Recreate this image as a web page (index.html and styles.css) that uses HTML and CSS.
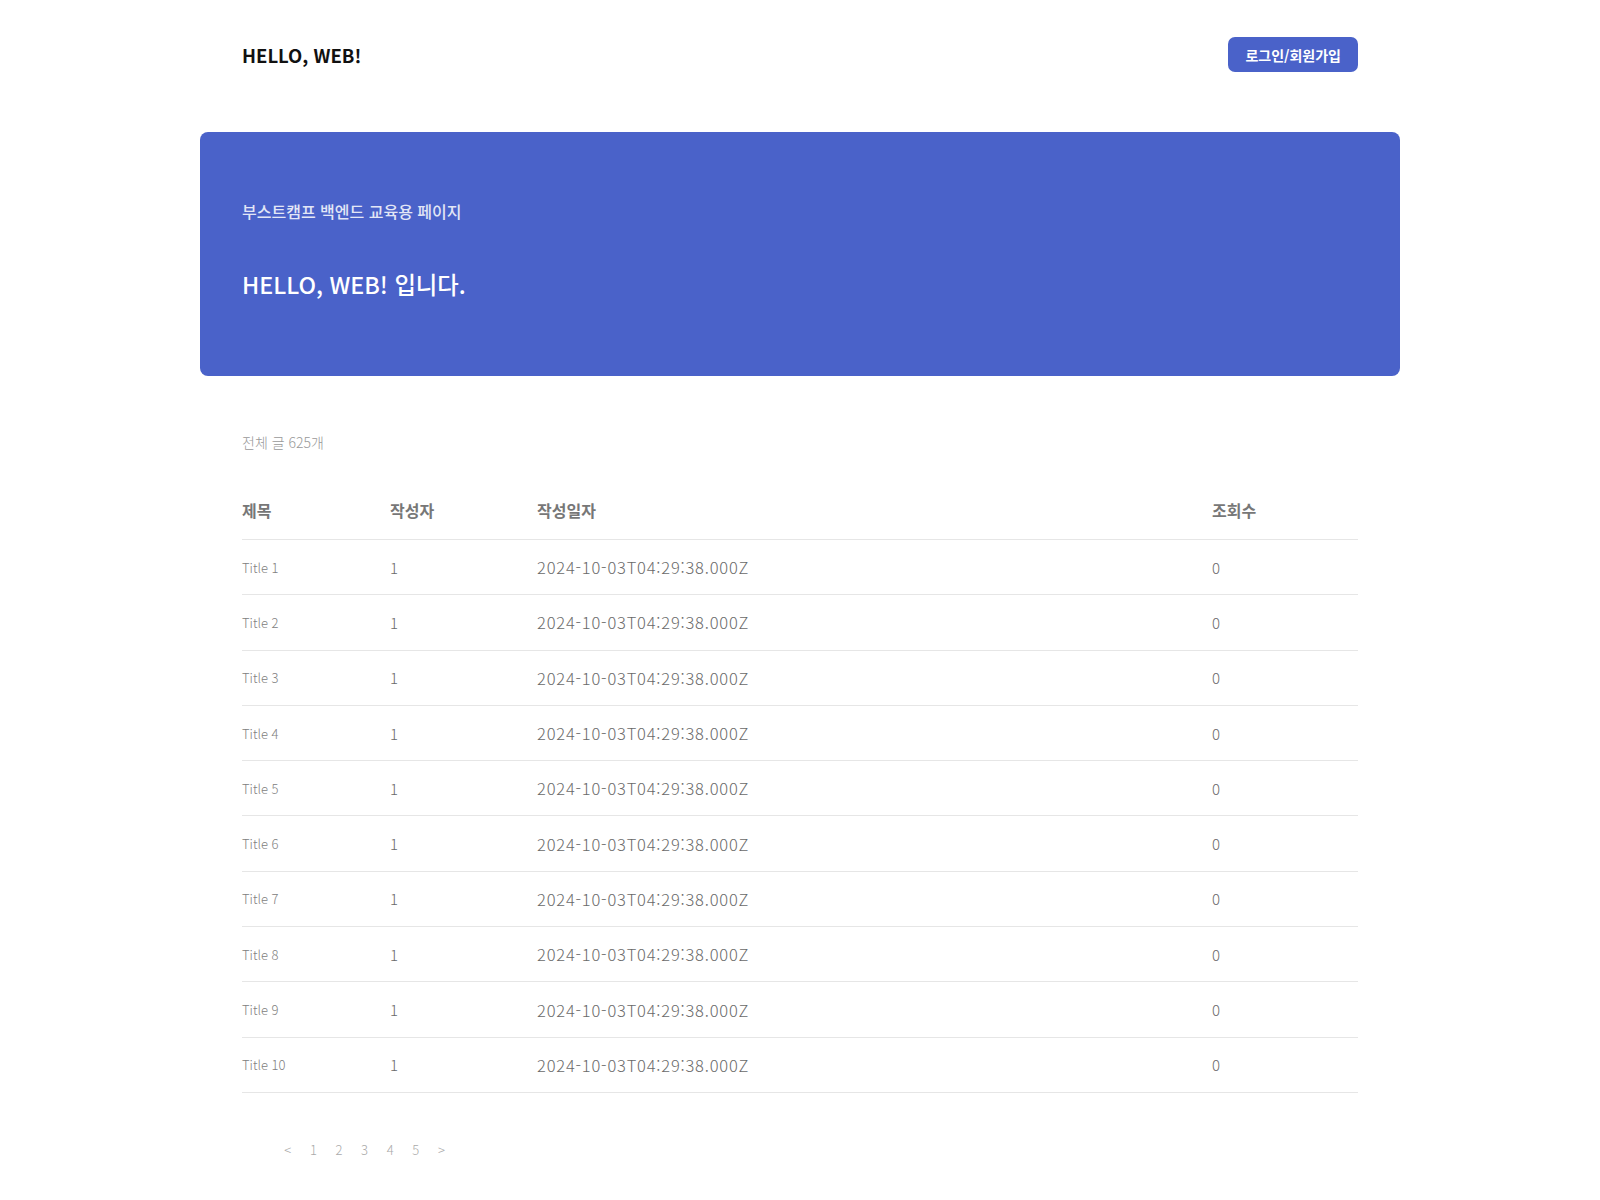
FILE: index.html
```html
<!DOCTYPE html>
<html lang="ko">
<head>
    <meta charset="UTF-8">
    <meta name="viewport" content="width=device-width, initial-scale=1.0">
    <title>HELLO, WEB!</title>
    <link rel="stylesheet" href="styles.css">
</head>
<body>
    <div class="page">
        <header class="top-bar">
            <a class="logo" href="#">HELLO, WEB!</a>
            <button class="login-btn">로그인/회원가입</button>
        </header>

        <section class="hero">
            <p class="hero-sub">부스트캠프 백엔드 교육용 페이지</p>
            <h1 class="hero-title">HELLO, WEB! 입니다.</h1>
        </section>

        <main class="board">
            <p class="post-count">전체 글 625개</p>
            <table class="post-table">
                <thead>
                    <tr>
                        <th class="col-title">제목</th>
                        <th class="col-author">작성자</th>
                        <th class="col-date">작성일자</th>
                        <th class="col-views">조회수</th>
                    </tr>
                </thead>
                <tbody>
                    <tr><td class="col-title">Title 1</td><td>1</td><td class="col-date">2024-10-03T04:29:38.000Z</td><td>0</td></tr>
                    <tr><td class="col-title">Title 2</td><td>1</td><td class="col-date">2024-10-03T04:29:38.000Z</td><td>0</td></tr>
                    <tr><td class="col-title">Title 3</td><td>1</td><td class="col-date">2024-10-03T04:29:38.000Z</td><td>0</td></tr>
                    <tr><td class="col-title">Title 4</td><td>1</td><td class="col-date">2024-10-03T04:29:38.000Z</td><td>0</td></tr>
                    <tr><td class="col-title">Title 5</td><td>1</td><td class="col-date">2024-10-03T04:29:38.000Z</td><td>0</td></tr>
                    <tr><td class="col-title">Title 6</td><td>1</td><td class="col-date">2024-10-03T04:29:38.000Z</td><td>0</td></tr>
                    <tr><td class="col-title">Title 7</td><td>1</td><td class="col-date">2024-10-03T04:29:38.000Z</td><td>0</td></tr>
                    <tr><td class="col-title">Title 8</td><td>1</td><td class="col-date">2024-10-03T04:29:38.000Z</td><td>0</td></tr>
                    <tr><td class="col-title">Title 9</td><td>1</td><td class="col-date">2024-10-03T04:29:38.000Z</td><td>0</td></tr>
                    <tr><td class="col-title">Title 10</td><td>1</td><td class="col-date">2024-10-03T04:29:38.000Z</td><td>0</td></tr>
                </tbody>
            </table>

            <nav class="pagination">
                <a href="#">&lt;</a>
                <a href="#">1</a>
                <a href="#">2</a>
                <a href="#">3</a>
                <a href="#">4</a>
                <a href="#">5</a>
                <a href="#">&gt;</a>
            </nav>
        </main>
    </div>
</body>
</html>
```

FILE: styles.css
```css
body {
    margin: 0;
    background: #fff;
    font-family: 'Noto Sans CJK KR', 'Noto Sans', sans-serif;
    color: #333;
}
.page {
    width: 1200px;
    margin: 0 auto;
}
.top-bar {
    display: flex;
    justify-content: space-between;
    align-items: center;
    padding: 37px 42px 0;
    height: 35px;
}
.logo {
    color: #111;
    font-size: 18.5px;
    font-weight: 700;
    text-decoration: none;
}
.login-btn {
    height: 35px;
    padding: 0 17px;
    background: #4a62c9;
    color: #fff;
    border: none;
    border-radius: 7px;
    font-family: inherit;
    font-size: 14px;
    font-weight: 700;
    cursor: pointer;
}
.hero {
    margin-top: 60px;
    height: 244px;
    box-sizing: border-box;
    padding: 68px 42px 0;
    background: #4a62c9;
    border-radius: 8px;
}
.hero-sub {
    margin: 0;
    color: #e2e6f6;
    font-size: 16px;
    font-weight: 500;
    line-height: 22px;
}
.hero-title {
    margin: 48px 0 0;
    color: #fff;
    font-size: 23.3px;
    font-weight: 500;
    line-height: 28px;
}
.board {
    padding: 0 42px;
}
.post-count {
    margin: 56px 0 0;
    color: #999;
    font-size: 14px;
    font-weight: 300;
    line-height: 20px;
}
.post-table {
    width: 100%;
    margin-top: 32px;
    border-collapse: collapse;
}
.post-table th {
    text-align: left;
    color: #777;
    font-size: 16px;
    font-weight: 700;
    height: 51px;
    padding: 0 0 4px;
    vertical-align: middle;
    border-bottom: 1px solid #e6e6e6;
}
.post-table td {
    height: 54.3px;
    padding: 0;
    color: #6a6a6a;
    font-size: 15px;
    font-weight: 300;
    border-bottom: 1px solid #e6e6e6;
}
.post-table td.col-title {
    font-size: 13px;
    color: #808080;
}
.post-table td.col-date {
    font-size: 16.5px;
    letter-spacing: 0.8px;
}
.col-title { width: 148px; }
.col-author { width: 147px; }
.col-date { width: 675px; }
.pagination {
    display: flex;
    margin: 47px 0 40px 33px;
}
.pagination a {
    width: 25.6px;
    text-align: center;
    color: #aaa;
    font-size: 13px;
    font-weight: 300;
    line-height: 20px;
    text-decoration: none;
}
```
